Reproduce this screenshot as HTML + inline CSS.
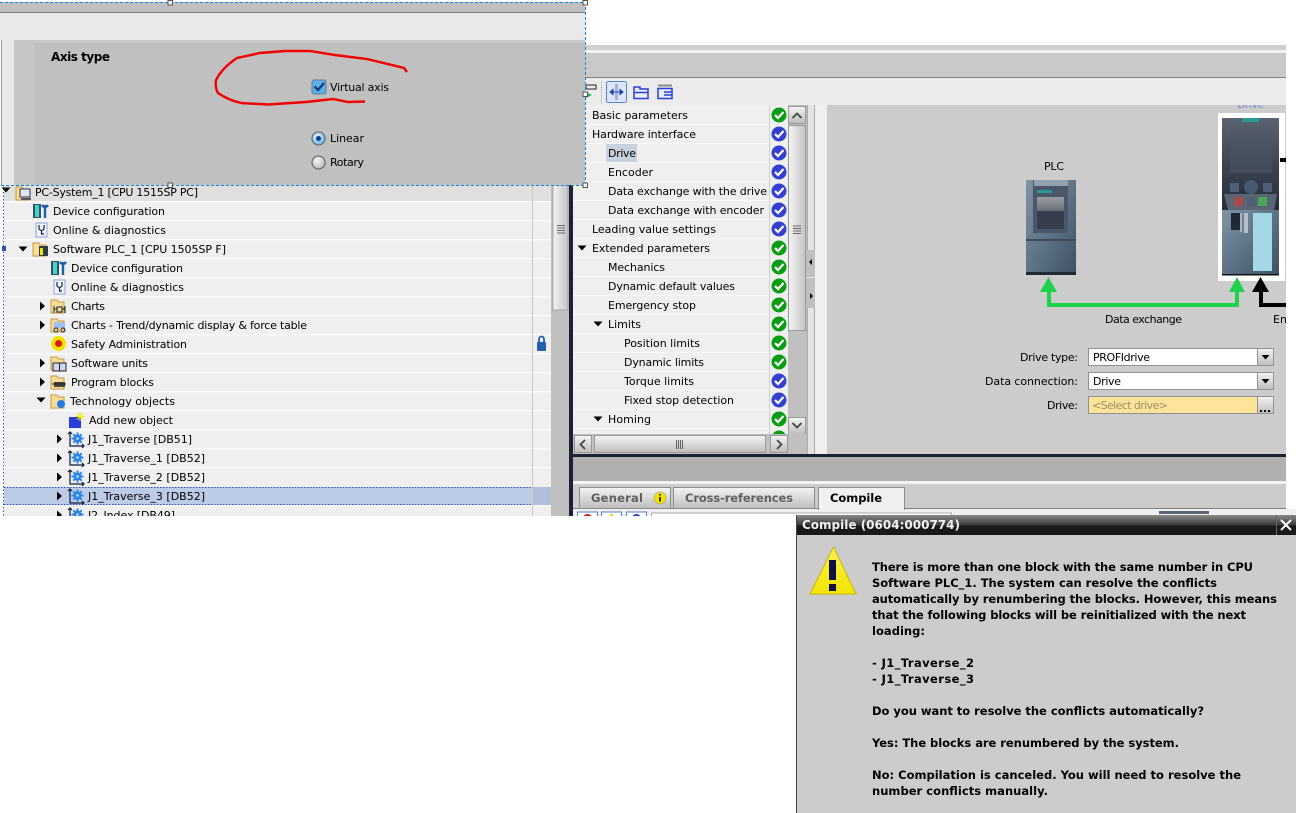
<!DOCTYPE html>
<html><head><meta charset="utf-8"><style>
html,body{margin:0;padding:0;background:#fff;width:1296px;height:813px;overflow:hidden}
svg{display:block}
text{font-family:"DejaVu Sans","Liberation Sans",sans-serif;font-size:11px;fill:#000}
.b{font-weight:bold;font-size:11.5px;fill:#000}
</style></head><body>
<svg width="1296" height="813" viewBox="0 0 1296 813" xmlns="http://www.w3.org/2000/svg">
<defs>
<linearGradient id="btn" x1="0" y1="0" x2="0" y2="1"><stop offset="0" stop-color="#f4f4f4"/><stop offset="1" stop-color="#bdbdbd"/></linearGradient>
<linearGradient id="hbtn" x1="0" y1="0" x2="1" y2="0"><stop offset="0" stop-color="#f4f4f4"/><stop offset="1" stop-color="#c4c4c4"/></linearGradient>
<linearGradient id="title" x1="0" y1="0" x2="0" y2="1"><stop offset="0" stop-color="#8a8a8a"/><stop offset=".5" stop-color="#3a3a3a"/><stop offset=".55" stop-color="#191919"/><stop offset="1" stop-color="#191919"/></linearGradient>
<linearGradient id="dev" x1="0" y1="0" x2="1" y2="1"><stop offset="0" stop-color="#7f95a6"/><stop offset="1" stop-color="#3d5163"/></linearGradient>
<linearGradient id="scr" x1="0" y1="0" x2="0" y2="1"><stop offset="0" stop-color="#5c6472"/><stop offset=".55" stop-color="#3a4250"/><stop offset="1" stop-color="#262e3a"/></linearGradient>
<linearGradient id="lcd" x1="0" y1="0" x2="0" y2="1"><stop offset="0" stop-color="#9a9ca2"/><stop offset="1" stop-color="#6a6e78"/></linearGradient>
<linearGradient id="warn" x1="0" y1="0" x2="0" y2="1"><stop offset="0" stop-color="#fbf25a"/><stop offset="1" stop-color="#f2e400"/></linearGradient>
<radialGradient id="rb" cx=".4" cy=".35" r=".8"><stop offset="0" stop-color="#e8f6ff"/><stop offset="1" stop-color="#4aa8e0"/></radialGradient>
<radialGradient id="rg" cx=".4" cy=".35" r=".8"><stop offset="0" stop-color="#f4f4f4"/><stop offset="1" stop-color="#b0b0b0"/></radialGradient>
<g id="ok"><circle cx="0" cy="0" r="7.5" fill="#0a9c12"/><path d="M-4 0 L-1 3 L4.5 -3" fill="none" stroke="#fff" stroke-width="2.2"/></g>
<g id="bl"><circle cx="0" cy="0" r="7.5" fill="#3340cf"/><path d="M-4 0 L-1 3 L4.5 -3" fill="none" stroke="#fff" stroke-width="2.2"/></g>
<path id="tr" d="M0 -4.5 L5 0 L0 4.5 Z" fill="#000"/>
<path id="td" d="M-4.5 -2.5 L4.5 -2.5 L0 2.5 Z" fill="#000"/>
<g id="fold"><path d="M0 1 H6 L7.5 3 H13 V14 H0 Z" fill="#f6dd9a" stroke="#c79a3c"/></g>
<g id="cfg"><rect x="0" y="0" width="8" height="14" fill="#3a4f62"/><rect x="2" y="1" width="4" height="12" fill="#3cd6d0"/><path d="M12 1 V14 M9 1 Q12 5 15 1" stroke="#1c5fa8" stroke-width="2.4" fill="none"/></g>
<g id="diag"><rect x="0" y="0" width="11" height="14" fill="#f4f6ff" stroke="#8ea0d8"/><path d="M3 2 V6 Q5.5 9 8 6 V2 M5.5 8 V11 H8" stroke="#123" stroke-width="1.2" fill="none"/></g>
<g id="to"><path d="M0 -7 V7 H14 M-2 -5 L0 -7 L2 -5 M12 5 L14 7 L12 9" stroke="#111a40" stroke-width="1.2" fill="none"/><circle cx="7.5" cy="-0.5" r="4" fill="#1f7fe0"/><path d="M7.5 -6.5 V5.500 M1.500 -0.5 H13.500 M3.300 -4.700 L11.700 3.700 M11.700 -4.700 L3.300 3.700" stroke="#2a86e6" stroke-width="2"/><circle cx="7.5" cy="-0.5" r="1.300" fill="#bfe2ff"/></g>
</defs>

<!-- Left tree -->
<rect x="0" y="185" width="573" height="331" fill="#fff"/>
<rect x="4" y="185" width="547" height="331" fill="#efefef"/>
<rect x="4" y="185" width="528" height="17" fill="#e0e0e0"/>
<rect x="533" y="185" width="18" height="17" fill="#e0e0e0"/>
<g fill="#fafafa"><rect x="4" y="201" width="547" height="1.5"/><rect x="4" y="220" width="547" height="1.5"/><rect x="4" y="239" width="547" height="1.5"/><rect x="4" y="258" width="547" height="1.5"/><rect x="4" y="277" width="547" height="1.5"/><rect x="4" y="296" width="547" height="1.5"/><rect x="4" y="315" width="547" height="1.5"/><rect x="4" y="334" width="547" height="1.5"/><rect x="4" y="353" width="547" height="1.5"/><rect x="4" y="372" width="547" height="1.5"/><rect x="4" y="391" width="547" height="1.5"/><rect x="4" y="410" width="547" height="1.5"/><rect x="4" y="429" width="547" height="1.5"/><rect x="4" y="448" width="547" height="1.5"/><rect x="4" y="467" width="547" height="1.5"/><rect x="4" y="505" width="547" height="1.5"/></g>
<rect x="4" y="487" width="528" height="18" fill="#bccce6"/>
<rect x="533" y="487" width="18" height="18" fill="#b0bfd9"/>
<path d="M4 487.500 H532 M4 504.500 H532 M532.500 487 V505" fill="none" stroke="#2a50c8" stroke-dasharray="1.500 1.500"/>
<rect x="532" y="185" width="1" height="331" fill="#c8c8c8"/>
<path d="M3.5 185 V516" stroke="#2a50c8" stroke-dasharray="1.5 2" fill="none"/>
<rect x="2" y="246" width="4" height="5" fill="#2a50c8"/>
<rect x="551" y="185" width="18" height="331" fill="#c0c0c0"/>
<rect x="553" y="185" width="15" height="125" fill="url(#hbtn)" stroke="#9a9a9a" stroke-width=".8"/>
<path d="M557 225.5 H565 M557 228 H565 M557 230.5 H565 M557 233 H565" stroke="#444" stroke-width=".8"/>
<rect x="569" y="185" width="4" height="331" fill="#1a2233"/>

<use href="#td" x="6" y="190"/>
<g transform="translate(16,186)"><use href="#fold"/><rect x="4" y="3" width="10" height="8" fill="#dfe6f0" stroke="#334"/><rect x="5" y="12" width="10" height="2" fill="#556"/></g>
<text x="35" y="196" textLength="163">PC-System_1 [CPU 1515SP PC]</text>
<use href="#cfg" x="33" y="204"/><text x="53" y="215" textLength="112">Device configuration</text>
<use href="#diag" x="36" y="223"/><text x="53" y="234" textLength="113">Online &amp; diagnostics</text>
<use href="#td" x="23" y="249"/>
<g transform="translate(33,242)"><use href="#fold"/><rect x="6" y="4" width="9" height="10" fill="#2d3a48"/><rect x="7" y="6" width="3" height="7" fill="#f0e010"/></g>
<text x="53" y="253" textLength="173">Software PLC_1 [CPU 1505SP F]</text>
<use href="#cfg" x="51" y="261"/><text x="71" y="272" textLength="112">Device configuration</text>
<use href="#diag" x="54" y="280"/><text x="71" y="291" textLength="113">Online &amp; diagnostics</text>
<use href="#tr" x="40" y="306"/>
<g transform="translate(51,299)"><use href="#fold"/><path d="M3 7 V14 M3 10 H6 M6 8 H11 V13 H6 Z M11 10 H14 M14 7 V14" stroke="#123" fill="none"/></g>
<text x="71" y="310" textLength="34">Charts</text>
<use href="#tr" x="40" y="325"/>
<g transform="translate(51,318)"><use href="#fold"/><rect x="3" y="4" width="11" height="6" fill="#9fc0ee"/><circle cx="5" cy="12" r="2" fill="none" stroke="#223"/><circle cx="12" cy="12" r="2" fill="none" stroke="#223"/></g>
<text x="71" y="329" textLength="236">Charts - Trend/dynamic display &amp; force table</text>
<circle cx="58.500" cy="343.500" r="7.500" fill="#f2e100"/><circle cx="58.500" cy="343.500" r="3.500" fill="#e01818"/>
<text x="71" y="348" textLength="116">Safety Administration</text>
<rect x="537" y="342" width="9" height="9" rx="1" fill="#1f5fae"/><path d="M539 342 V339 A2.500 2.500 0 0 1 544 339 V342" fill="none" stroke="#1f5fae" stroke-width="1.800"/>
<use href="#tr" x="40" y="363"/>
<g transform="translate(51,356)"><use href="#fold"/><rect x="2" y="7" width="13" height="8" fill="#cfd8ef" stroke="#223"/><path d="M8.500 7 V15" stroke="#223"/></g>
<text x="71" y="367" textLength="77">Software units</text>
<use href="#tr" x="40" y="382"/>
<g transform="translate(51,375)"><use href="#fold"/><rect x="3" y="7" width="11" height="5" fill="#444"/><path d="M1 9 H15" stroke="#222"/></g>
<text x="71" y="386" textLength="83">Program blocks</text>
<use href="#td" x="41" y="400"/>
<g transform="translate(51,394)"><use href="#fold"/><circle cx="10" cy="10" r="4" fill="#1f7fe0"/></g>
<text x="70" y="405" textLength="105">Technology objects</text>
<rect x="69" y="417" width="12" height="11" fill="#2a3ee0"/><path d="M80 412 V421 M75.500 416.500 H84.500 M77 413.500 L83 419.500 M83 413.500 L77 419.500" stroke="#f4f000" stroke-width="1"/>
<text x="89" y="424" textLength="84">Add new object</text>
<use href="#tr" x="57" y="439"/><use href="#to" x="70" y="439"/><text x="88" y="443" textLength="104">J1_Traverse [DB51]</text>
<use href="#tr" x="57" y="458"/><use href="#to" x="70" y="458"/><text x="88" y="462" textLength="117">J1_Traverse_1 [DB52]</text>
<use href="#tr" x="57" y="477"/><use href="#to" x="70" y="477"/><text x="88" y="481" textLength="117">J1_Traverse_2 [DB52]</text>
<use href="#tr" x="57" y="496"/><use href="#to" x="70" y="496"/><text x="88" y="500" textLength="117">J1_Traverse_3 [DB52]</text>
<use href="#tr" x="57" y="515"/><use href="#to" x="70" y="515"/><text x="88" y="519" textLength="87">J2_Index [DB49]</text>
<rect x="0" y="516" width="580" height="10" fill="#fff"/>

<!-- Right area -->
<rect x="573" y="45" width="713" height="471" fill="#efefef"/>
<rect x="573" y="45" width="713" height="5" fill="#cfcfcf"/>
<rect x="573" y="50" width="713" height="3" fill="#f2f2f2"/>
<rect x="573" y="53" width="713" height="24" fill="#c9c9c9"/>
<rect x="573" y="77" width="713" height="1" fill="#808080"/>
<rect x="573" y="78" width="713" height="27" fill="#ebebeb"/>
<path d="M601.500 82 V103" stroke="#999" stroke-dasharray="1 1.500"/>
<rect x="606.500" y="81.500" width="20" height="21" rx="2" fill="#dce6f6" stroke="#5a80d0"/>
<path d="M616.500 84 V100" stroke="#9fb4e0" stroke-width="3"/><path d="M610 92 H623 M610 92 L613 89.500 V94.500 Z M623 92 L620 89.500 V94.500 Z" stroke="#1f3fae" fill="#1f3fae"/>
<g fill="#e8ecff" stroke="#2a3ed0" stroke-width="1.500"><path d="M634 87 H640 V89 H648 V98.500 H634 Z"/><path d="M634 92.500 H648"/><path d="M658 88.500 H672 V98.500 H658 Z M664 92 H672 M664 95 H672"/></g>
<path d="M658 85.500 H672" stroke="#888" stroke-width="2"/>
<rect x="586" y="85" width="10" height="4" fill="none" stroke="#222"/><path d="M586 92 L592 95 L586 98 Z" fill="#20c050"/>

<rect x="573" y="105" width="197" height="329" fill="#efefef"/>
<g fill="#f8f8f8"><rect x="573" y="124" width="197" height="1"/><rect x="573" y="143" width="197" height="1"/><rect x="573" y="162" width="197" height="1"/><rect x="573" y="181" width="197" height="1"/><rect x="573" y="200" width="197" height="1"/><rect x="573" y="219" width="197" height="1"/><rect x="573" y="238" width="197" height="1"/><rect x="573" y="257" width="197" height="1"/><rect x="573" y="276" width="197" height="1"/><rect x="573" y="295" width="197" height="1"/><rect x="573" y="314" width="197" height="1"/><rect x="573" y="333" width="197" height="1"/><rect x="573" y="352" width="197" height="1"/><rect x="573" y="371" width="197" height="1"/><rect x="573" y="390" width="197" height="1"/><rect x="573" y="409" width="197" height="1"/><rect x="573" y="428" width="197" height="1"/></g>
<rect x="769" y="105" width="1" height="329" fill="#d0d0d0"/>
<rect x="606" y="144" width="31" height="18" fill="#c8d2de"/>
<text x="592" y="119" textLength="96">Basic parameters</text>
<text x="592" y="138" textLength="104">Hardware interface</text>
<text x="608" y="157" textLength="28">Drive</text>
<text x="608" y="176" textLength="45">Encoder</text>
<text x="608" y="195" textLength="159">Data exchange with the drive</text>
<text x="608" y="214" textLength="156">Data exchange with encoder</text>
<text x="592" y="233" textLength="124">Leading value settings</text>
<use href="#td" x="582" y="248"/><text x="592" y="252" textLength="118">Extended parameters</text>
<text x="608" y="271" textLength="57">Mechanics</text>
<text x="608" y="290" textLength="127">Dynamic default values</text>
<text x="608" y="309" textLength="88">Emergency stop</text>
<use href="#td" x="598" y="324"/><text x="608" y="328" textLength="33">Limits</text>
<text x="624" y="347" textLength="76">Position limits</text>
<text x="624" y="366" textLength="80">Dynamic limits</text>
<text x="624" y="385" textLength="70">Torque limits</text>
<text x="624" y="404" textLength="110">Fixed stop detection</text>
<use href="#td" x="598" y="419"/><text x="608" y="423" textLength="43">Homing</text>
<text x="624" y="442" textLength="62">Active homing</text>
<use href="#ok" x="779" y="115"/><use href="#bl" x="779" y="134"/><use href="#bl" x="779" y="153"/><use href="#bl" x="779" y="172"/><use href="#bl" x="779" y="191"/><use href="#bl" x="779" y="210"/><use href="#bl" x="779" y="229"/><use href="#ok" x="779" y="248"/><use href="#ok" x="779" y="267"/><use href="#ok" x="779" y="286"/><use href="#ok" x="779" y="305"/><use href="#ok" x="779" y="324"/><use href="#ok" x="779" y="343"/><use href="#ok" x="779" y="362"/><use href="#bl" x="779" y="381"/><use href="#bl" x="779" y="400"/><use href="#ok" x="779" y="419"/><use href="#ok" x="779" y="438"/>

<!-- list scrollbars -->
<rect x="788" y="105" width="19" height="349" fill="#c0c0c0"/>
<rect x="788.500" y="106.500" width="17" height="17" fill="url(#btn)" stroke="#999"/>
<path d="M792.500 118 L797 113.500 L801.500 118" fill="none" stroke="#444" stroke-width="1.800"/>
<rect x="788.500" y="125.500" width="17" height="205" fill="url(#hbtn)" stroke="#999"/>
<path d="M793 226 H801 M793 228.500 H801 M793 231 H801 M793 233.500 H801" stroke="#444" stroke-width=".8"/>
<rect x="788.500" y="417.500" width="17" height="17" fill="url(#btn)" stroke="#999"/>
<path d="M792.500 423 L797 427.500 L801.500 423" fill="none" stroke="#444" stroke-width="1.800"/>
<rect x="573" y="434" width="234" height="20" fill="#c0c0c0"/>
<rect x="574.500" y="435.500" width="17" height="17" fill="url(#btn)" stroke="#999"/>
<path d="M585 440 L580.500 444.500 L585 449" fill="none" stroke="#444" stroke-width="1.800"/>
<rect x="594.500" y="435.500" width="171" height="17" fill="url(#btn)" stroke="#999"/>
<path d="M676.500 440 V449 M678.500 440 V449 M680.500 440 V449 M682.500 440 V449" stroke="#444" stroke-width=".8"/>
<rect x="770.500" y="435.500" width="17" height="17" fill="url(#btn)" stroke="#999"/>
<path d="M777 440 L781.500 444.500 L777 449" fill="none" stroke="#444" stroke-width="1.800"/>

<!-- splitter -->
<rect x="807" y="105" width="8" height="349" fill="#e4e4e4"/>
<path d="M807.500 105 V454 M814.500 105 V454" stroke="#aaa"/>
<rect x="807" y="250" width="8" height="58" fill="#c0c0c0"/>
<path d="M807 277.500 H815" stroke="#e4e4e4"/>
<path d="M812 259 L809 262 L812 265 Z M810 293 L813 296 L810 299 Z" fill="#000"/>

<!-- Diagram -->
<rect x="827" y="105" width="459" height="349" fill="#cccccc"/>
<clipPath id="dc"><rect x="1200" y="105" width="86" height="20"/></clipPath>
<g clip-path="url(#dc)"><text x="1237" y="108" textLength="27" style="fill:#7c8cd0">Drive</text></g>
<text x="1044" y="170" textLength="20">PLC</text>
<!-- PLC device -->
<rect x="1026" y="180" width="50" height="95" fill="url(#dev)"/>
<rect x="1033" y="180" width="35" height="53" fill="#4b5668"/>
<rect x="1034" y="180" width="34" height="6" fill="#8fa0ae"/>
<rect x="1037" y="190" width="15" height="3" fill="#2a9a94"/>
<rect x="1037" y="197" width="27" height="14" fill="url(#lcd)"/>
<rect x="1037" y="211" width="27" height="18" fill="#363d4c"/>
<rect x="1026" y="239" width="50" height="2" fill="#3e4c5a"/>
<rect x="1026" y="272" width="50" height="3" fill="#1f2a33"/>
<!-- Drive device -->
<rect x="1218" y="113" width="67" height="168" fill="#fff"/>
<rect x="1222" y="118" width="57" height="92" fill="url(#scr)"/>
<rect x="1230" y="129" width="42" height="44" fill="#4d5563" opacity=".55"/>
<rect x="1242" y="118" width="17" height="4" fill="#2a9a94"/>
<rect x="1230" y="183" width="9" height="9" fill="#4f5f74"/><rect x="1263" y="183" width="9" height="9" fill="#4f5f74"/>
<circle cx="1251" cy="187" r="7" fill="#465a72"/>
<path d="M1224 194 H1277 L1274 210 H1228 Z" fill="#5a6472"/>
<rect x="1234" y="197" width="9" height="9" fill="#a84a4a"/><rect x="1247" y="197" width="8" height="9" fill="#4f5f74"/><rect x="1258" y="197" width="9" height="9" fill="#4aa858"/>
<rect x="1222" y="210" width="57" height="64" fill="url(#dev)"/>
<rect x="1253" y="213" width="19" height="58" fill="#a4d8e6"/>
<rect x="1231" y="213" width="9" height="17" fill="#1f2838"/><rect x="1240" y="213" width="2" height="19" fill="#a8b4bc"/>
<rect x="1244" y="213" width="4" height="20" fill="#b4bec6"/>
<rect x="1222" y="274" width="57" height="1.500" fill="#111"/>
<rect x="1280" y="158" width="6" height="4" fill="#000"/>
<!-- arrows -->
<g fill="#1ed24c"><path d="M1048.500 277 L1057 292 H1040 Z"/><path d="M1237 277 L1245 292 H1229 Z"/><path d="M1047 290 H1051 V303 H1235 V290 H1239 V307 H1047 Z"/></g>
<path d="M1260.500 277 L1269 292 H1252 Z" fill="#000"/><path d="M1259 290 H1263 V303 H1286 V307 H1259 Z" fill="#000"/>
<text x="1105" y="323" textLength="77">Data exchange</text>
<clipPath id="en"><rect x="1270" y="310" width="16" height="20"/></clipPath>
<g clip-path="url(#en)"><text x="1273" y="323">Encoder</text></g>
<!-- form -->
<text x="1020" y="361" textLength="58">Drive type:</text>
<text x="985" y="385" textLength="93">Data connection:</text>
<text x="1047" y="409" textLength="31">Drive:</text>
<rect x="1088.500" y="348.500" width="185" height="17" fill="#fff" stroke="#919191"/>
<text x="1093" y="361" textLength="57">PROFIdrive</text>
<rect x="1257.500" y="348.500" width="16" height="17" fill="url(#btn)" stroke="#919191"/><path d="M1261.500 355 H1269.500 L1265.500 359.500 Z" fill="#000"/>
<rect x="1088.500" y="372.500" width="185" height="17" fill="#fff" stroke="#919191"/>
<text x="1093" y="385" textLength="28">Drive</text>
<rect x="1257.500" y="372.500" width="16" height="17" fill="url(#btn)" stroke="#919191"/><path d="M1261.500 379 H1269.500 L1265.500 383.500 Z" fill="#000"/>
<rect x="1088.500" y="396.500" width="185" height="17" fill="#fee49b" stroke="#919191"/>
<text x="1092" y="409" textLength="76" style="fill:#9a8f68">&lt;Select drive&gt;</text>
<rect x="1257.500" y="396.500" width="16" height="17" fill="url(#btn)" stroke="#919191"/><path d="M1260 410 h2 v2 h-2z M1264 410 h2 v2 h-2z M1268 410 h2 v2 h-2z" fill="#000"/>

<!-- bottom -->
<rect x="573" y="454" width="713" height="3" fill="#1a2233"/>
<rect x="573" y="457" width="713" height="24" fill="#b0b0b0"/>
<rect x="573" y="481" width="713" height="3" fill="#f4f4f4"/>
<rect x="573" y="484" width="713" height="24" fill="#cccccc"/>
<rect x="573" y="508" width="713" height="1" fill="#808080"/>
<rect x="573" y="509" width="723" height="7" fill="#f0f0f0"/>
<rect x="1159" y="511" width="50" height="3" fill="#5a6874"/>
<rect x="579.500" y="487.500" width="91" height="21" fill="url(#btn)" stroke="#8c8c8c"/>
<text x="591" y="502" class="b" textLength="52" style="fill:#606060">General</text>
<circle cx="660" cy="498" r="6" fill="#f2e200" stroke="#999" stroke-width=".6"/><path d="M660 494 v1.500 M660 497 v4.500" stroke="#222" stroke-width="1.800"/>
<rect x="673.500" y="487.500" width="141" height="21" fill="url(#btn)" stroke="#8c8c8c"/>
<text x="685" y="502" class="b" textLength="108" style="fill:#606060">Cross-references</text>
<rect x="818.500" y="487.500" width="86" height="22" fill="#f0f0f0" stroke="#8c8c8c"/>
<rect x="819" y="507" width="85" height="3" fill="#f0f0f0"/>
<text x="830" y="502" class="b" textLength="52">Compile</text>
<g fill="#fff" stroke="#5a80d0"><rect x="577.500" y="512" width="20" height="12"/><rect x="601.500" y="512" width="20" height="12"/><rect x="626.500" y="512" width="20" height="12"/></g>
<circle cx="587.500" cy="519" r="5" fill="#e01818"/><path d="M611.500 513 L615.500 519 H607.500 Z" fill="#f0d000"/><circle cx="636.500" cy="519" r="5" fill="#2a3ed0"/>
<rect x="651.500" y="513" width="300" height="10" fill="#fff" stroke="#aaa"/>
<rect x="573" y="516" width="224" height="20" fill="#fff"/>

<!-- Compile dialog -->
<rect x="797" y="515" width="499" height="298" fill="#cccccc"/>
<rect x="796" y="515" width="1" height="298" fill="#444"/>
<rect x="797" y="515" width="499" height="20" fill="url(#title)"/>
<rect x="1276" y="515" width="1" height="20" fill="#666"/>
<rect x="1277" y="515" width="19" height="20" fill="url(#title)"/>
<path d="M1281 520 L1291 530 M1291 520 L1281 530" stroke="#fff" stroke-width="2"/>
<text x="802" y="529" class="b" textLength="158" style="fill:#f0f0f0;font-size:12px">Compile (0604:000774)</text>
<path d="M833.500 547 L856 594 H810 Z" fill="url(#warn)" stroke="#d0b400"/>
<rect x="829" y="560" width="7" height="20" fill="#101040"/><rect x="829" y="584" width="7" height="7" fill="#101040"/>
<text x="872" y="571" class="b" textLength="381">There is more than one block with the same number in CPU</text>
<text x="872" y="587" class="b" textLength="345">Software PLC_1. The system can resolve the conflicts</text>
<text x="872" y="603" class="b" textLength="405">automatically by renumbering the blocks. However, this means</text>
<text x="872" y="619" class="b" textLength="374">that the following blocks will be reinitialized with the next</text>
<text x="872" y="635" class="b" textLength="53">loading:</text>
<text x="872" y="667" class="b" textLength="102">- J1_Traverse_2</text>
<text x="872" y="683" class="b" textLength="102">- J1_Traverse_3</text>
<text x="872" y="715" class="b" textLength="332">Do you want to resolve the conflicts automatically?</text>
<text x="872" y="747" class="b" textLength="307">Yes: The blocks are renumbered by the system.</text>
<text x="872" y="779" class="b" textLength="369">No: Compilation is canceled. You will need to resolve the</text>
<text x="872" y="795" class="b" textLength="176">number conflicts manually.</text>

<!-- Top dialog -->
<rect x="0" y="2" width="585" height="183" fill="#e9e9e9"/>
<rect x="0" y="2" width="585" height="10" fill="#c0c0c0"/>
<rect x="0" y="12" width="585" height="1" fill="#808080"/>
<rect x="0" y="40" width="2" height="145" fill="#fff"/>
<rect x="1" y="40" width="1" height="145" fill="#999"/>
<rect x="14" y="40" width="571" height="145" fill="#c9c9c9"/>
<rect x="35" y="43" width="550" height="142" fill="#c0c0c0"/>
<rect x="14" y="40" width="21" height="145" fill="#c6c6c6"/>
<text x="51" y="61" class="b" textLength="59" style="font-size:12px">Axis type</text>
<rect x="312" y="80" width="14" height="14" rx="2" fill="#5cb0e8" stroke="#6a7a88"/>
<path d="M314.500 86.500 L318 90 L324 83" fill="none" stroke="#143a80" stroke-width="2.400"/>
<text x="330" y="91" textLength="59">Virtual axis</text>
<circle cx="318.500" cy="138.500" r="6.500" fill="url(#rb)" stroke="#6a7078" stroke-width="1.300"/><circle cx="318.500" cy="138.500" r="2.500" fill="#123a90"/>
<text x="330" y="142" textLength="34">Linear</text>
<circle cx="318.500" cy="162.500" r="6.500" fill="url(#rg)" stroke="#6a7078" stroke-width="1.300"/>
<text x="330" y="166" textLength="34">Rotary</text>
<path d="M407 72 L404 68 L367 59 L335 55 L310 51 L285 51 L260 53 L237 58 Q222 68 216 80 Q215 88 218 93 Q228 100 241 103 L268 104.500 L306 102 L333 99 L348 102 L365 101.500" fill="none" stroke="#f00000" stroke-width="2.400"/>
<path d="M0 2.500 H585.500 V185.500 H0" fill="none" stroke="#0f86ea" stroke-dasharray="3 2"/>
<g fill="#f8f8f8" stroke="#555"><rect x="168" y="0.500" width="4.500" height="4.500"/><rect x="583" y="0.500" width="4.500" height="4.500"/><rect x="583" y="92" width="4.500" height="4.500"/><rect x="168" y="183" width="4.500" height="4.500"/><rect x="583" y="183" width="4.500" height="4.500"/></g>
</svg>
</body></html>
